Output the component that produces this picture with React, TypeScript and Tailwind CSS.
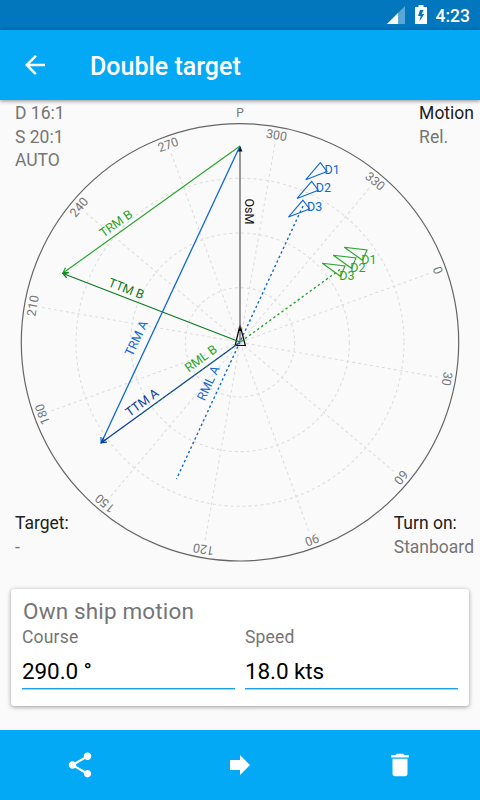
const CX = 240
const CY = 242.3
const R = 218.7
const HEADING = 290

const BLUE = "#1068d4"
const NAVY = "#0d3c9f"
const GREEN = "#2ba52f"
const DARK_GREEN = "#0b7a1e"

const bearings = [0, 30, 60, 90, 120, 150, 180, 210, 240, 270, 300, 330]

const vectorLabels = [
  { text: "TRM B", x: 116, y: 123.4, angle: -35.7, color: GREEN },
  { text: "TTM B", x: 126.3, y: 188.6, angle: 21, color: DARK_GREEN },
  { text: "TRM A", x: 136.3, y: 238.3, angle: -64.9, color: BLUE },
  { text: "RML B", x: 200.8, y: 258.3, angle: -36, color: GREEN },
  { text: "RML A", x: 208.3, y: 283.1, angle: -64.9, color: BLUE },
  { text: "TTM A", x: 142, y: 302.5, angle: -36, color: NAVY },
  { text: "OsM", x: 248.9, y: 111.5, angle: 90, color: "#111" },
]

const targetA = [
  { name: "D1", dx: 0, dy: 0 },
  { name: "D2", dx: -8.7, dy: 18.7 },
  { name: "D3", dx: -17.4, dy: 37.4 },
]

const targetB = [
  { name: "D1", dx: 0, dy: 0 },
  { name: "D2", dx: -11, dy: 8 },
  { name: "D3", dx: -22, dy: 16 },
]

function Arrow({
  x1,
  y1,
  x2,
  y2,
  color,
  width = 1.2,
}: {
  x1: number
  y1: number
  x2: number
  y2: number
  color: string
  width?: number
}) {
  const angle = (Math.atan2(y2 - y1, x2 - x1) * 180) / Math.PI
  return (
    <g stroke={color} fill="none">
      <line x1={x1} y1={y1} x2={x2} y2={y2} strokeWidth={width} />
      <path
        d="M-5 -2.8 L0 0 L-5 2.8"
        transform={`translate(${x2} ${y2}) rotate(${angle})`}
        strokeWidth="1.3"
      />
    </g>
  )
}

function RadarPlot() {
  return (
    <svg viewBox="0 0 480 480" className="col-start-1 row-start-1 h-[480px] w-[480px]" fontFamily="Roboto, sans-serif">
      <g stroke="#dedede" strokeWidth="1.1" strokeDasharray="3 3" fill="none">
        {[1, 2, 3].map((i) => (
          <circle key={i} cx={CX} cy={CY} r={(R * i) / 4} />
        ))}
        {bearings.map((b) => (
          <line key={b} x1={CX} y1={CY} x2={CX} y2={CY - 202} transform={`rotate(${b - HEADING} ${CX} ${CY})`} />
        ))}
      </g>
      <circle cx={CX} cy={CY} r={R} fill="none" stroke="#666" strokeWidth="1.2" />

      <g fill="#777" fontSize="12.5" textAnchor="middle">
        <text x={CX} y="17.4" fontSize="12">
          P
        </text>
        {bearings.map((b) => (
          <text key={b} x={CX} y={CY - 206} transform={`rotate(${b - HEADING} ${CX} ${CY})`}>
            {b}
          </text>
        ))}
      </g>

      {/* own ship */}
      <path d="M240 225 L235.2 245.5 H245.3 Z" fill="none" stroke="#000" strokeWidth="1.2" />
      <line x1="240" y1="242" x2="240" y2="47" stroke="#858585" strokeWidth="1.7" />
      <path d="M240 46 L237.5 51.5 H242.5 Z" fill="#111" />
      <path d="M240 225 L238.6 231 H241.4 Z" fill="#000" />

      {/* relative motion lines */}
      <line x1="303" y1="106" x2="176.5" y2="379" stroke={BLUE} strokeWidth="1.4" strokeDasharray="2.4 2.6" />
      <line x1="340" y1="169.5" x2={CX} y2={CY} stroke={GREEN} strokeWidth="1.4" strokeDasharray="2.4 2.6" />

      <Arrow x1={240} y1={46} x2={63} y2={173} color={GREEN} />
      <Arrow x1={240} y1={242} x2={63} y2={173.5} color={DARK_GREEN} />
      <Arrow x1={240} y1={46} x2={101.3} y2={342.7} color={BLUE} width={1.3} />
      <Arrow x1={240} y1={242.3} x2={101.3} y2={342.7} color={NAVY} width={1.3} />
      <line x1={CX} y1={CY} x2="140" y2="314.8" stroke={GREEN} strokeWidth="1" strokeDasharray="2 3" opacity="0.8" />

      {targetA.map((t) => (
        <g key={t.name} transform={`translate(${t.dx} ${t.dy})`}>
          <path d="M305.8 79.7 L320.3 62.7 L327 71.5 Z" fill="none" stroke={BLUE} strokeWidth="1.1" />
          <text x="324.5" y="73.7" fontSize="12.5" fill={BLUE}>
            {t.name}
          </text>
        </g>
      ))}
      {targetB.map((t) => (
        <g key={t.name} transform={`translate(${t.dx} ${t.dy})`}>
          <path d="M344.3 147.3 L367 150 L362.5 160.3 Z" fill="none" stroke={GREEN} strokeWidth="1.1" />
          <text x="361.2" y="163.8" fontSize="12.5" fill={GREEN}>
            {t.name}
          </text>
        </g>
      ))}

      {vectorLabels.map((l) => (
        <text
          key={l.text}
          x={0}
          y={4.3}
          fontSize="12.5"
          textAnchor="middle"
          fill={l.color}
          transform={`translate(${l.x} ${l.y}) rotate(${l.angle})`}
        >
          {l.text}
        </text>
      ))}
    </svg>
  )
}

function StatusBar() {
  return (
    <div className="flex h-[30px] items-center justify-end bg-[#0277bd] pr-[10px] text-white">
      <svg viewBox="0 0 18 18" className="mr-[10px] h-[18px] w-[18px]">
        <path d="M18 0V18H0Z" fill="#fff" fillOpacity="0.35" />
        <path d="M11 7V18H0Z" fill="#fff" />
      </svg>
      <svg viewBox="0 0 12 19" className="mr-[9px] mb-px h-[19px] w-[12px]">
        <path
          fillRule="evenodd"
          d="M3.5 0h5v2H12v17H0V2h3.5zM5 5L3 11h2.6L4.4 16.5 9.3 9H6.7L8.6 5z"
          fill="#fff"
        />
      </svg>
      <span className="mt-[2px] text-[17.5px] leading-[28px] font-medium">4:23</span>
    </div>
  )
}

function Field({ label, value }: { label: string; value: string }) {
  return (
    <div className="flex-1">
      <div className="h-6 text-[17.5px] leading-6 tracking-[0.2px] text-[#757575]">{label}</div>
      <div className="mt-[7px] h-8 text-[22.5px] leading-[30px] tracking-[-0.1px] text-black">{value}</div>
      <div className="h-[2px] border-t border-[#1e9fea] bg-[#a5d8f8]" />
    </div>
  )
}

export default function App() {
  return (
    <div className="flex h-[800px] w-[480px] flex-col overflow-hidden bg-[#fafafa] font-[Roboto,sans-serif]">
      <StatusBar />
      <header className="z-10 flex h-[70px] shrink-0 items-center bg-[#03a9f4] pl-5 text-white shadow-[0_1px_4px_rgba(0,0,0,0.45)]">
        <svg viewBox="0 0 24 24" className="h-[30px] w-[30px]" fill="#fff">
          <path d="M20 11H7.83l5.59-5.59L12 4l-8 8 8 8 1.41-1.41L7.83 13H20z" />
        </svg>
        <h1 className="mt-[3px] ml-10 text-[25px] leading-8 font-medium">Double target</h1>
      </header>

      <main className="grid h-[489px] shrink-0 grid-cols-1 grid-rows-1">
        <RadarPlot />
        <div className="col-start-1 row-start-1 flex h-[459px] flex-col justify-between pt-px pr-[6px] pl-[15px] text-[17.5px] leading-6 text-[#757575]">
          <div className="flex justify-between">
            <div>
              <p>D 16:1</p>
              <p>S 20:1</p>
              <p className="-mt-px">AUTO</p>
            </div>
            <div>
              <p className="text-[#212121]">Motion</p>
              <p>Rel.</p>
            </div>
          </div>
          <div className="flex justify-between">
            <div>
              <p className="text-[#212121]">Target:</p>
              <p>-</p>
            </div>
            <div>
              <p className="text-[#212121]">Turn on:</p>
              <p>Stanboard</p>
            </div>
          </div>
        </div>
      </main>

      <section className="mx-[11px] h-[117px] shrink-0 rounded-[3px] bg-white px-[11px] pt-[7px] shadow-[0_1px_4px_rgba(0,0,0,0.4)]">
        <h2 className="mb-px ml-px h-7 text-[22.5px] leading-[30px] tracking-[0.15px] text-[#757575]">
          Own ship motion
        </h2>
        <div className="flex gap-[10px]">
          <Field label="Course" value="290.0 °" />
          <Field label="Speed" value="18.0 kts" />
        </div>
      </section>

      <footer className="mt-auto grid h-[70px] shrink-0 grid-cols-3 place-items-center bg-[#03a9f4]">
        <svg viewBox="0 0 24 24" className="h-[30px] w-[30px]" fill="#fff">
          <path d="M18 16.08c-.76 0-1.44.3-1.96.77L8.91 12.7c.05-.23.09-.46.09-.7s-.04-.47-.09-.7l7.05-4.11c.54.5 1.25.81 2.04.81 1.66 0 3-1.34 3-3s-1.34-3-3-3-3 1.34-3 3c0 .24.04.47.09.7L8.04 9.81C7.5 9.31 6.79 9 6 9c-1.66 0-3 1.34-3 3s1.34 3 3 3c.79 0 1.5-.31 2.04-.81l7.12 4.16c-.05.21-.08.43-.08.65 0 1.61 1.31 2.92 2.92 2.92s2.92-1.31 2.92-2.92-1.31-2.92-2.92-2.92z" />
        </svg>
        <svg viewBox="0 0 24 24" className="h-[30px] w-[30px]" fill="#fff">
          <path d="M12 8V4l8 8-8 8v-4H4V8z" />
        </svg>
        <svg viewBox="0 0 24 24" className="h-[30px] w-[30px]" fill="#fff">
          <path d="M6 19c0 1.1.9 2 2 2h8c1.1 0 2-.9 2-2V7H6v12zM19 4h-3.5l-1-1h-5l-1 1H5v2h14V4z" />
        </svg>
      </footer>
    </div>
  )
}
